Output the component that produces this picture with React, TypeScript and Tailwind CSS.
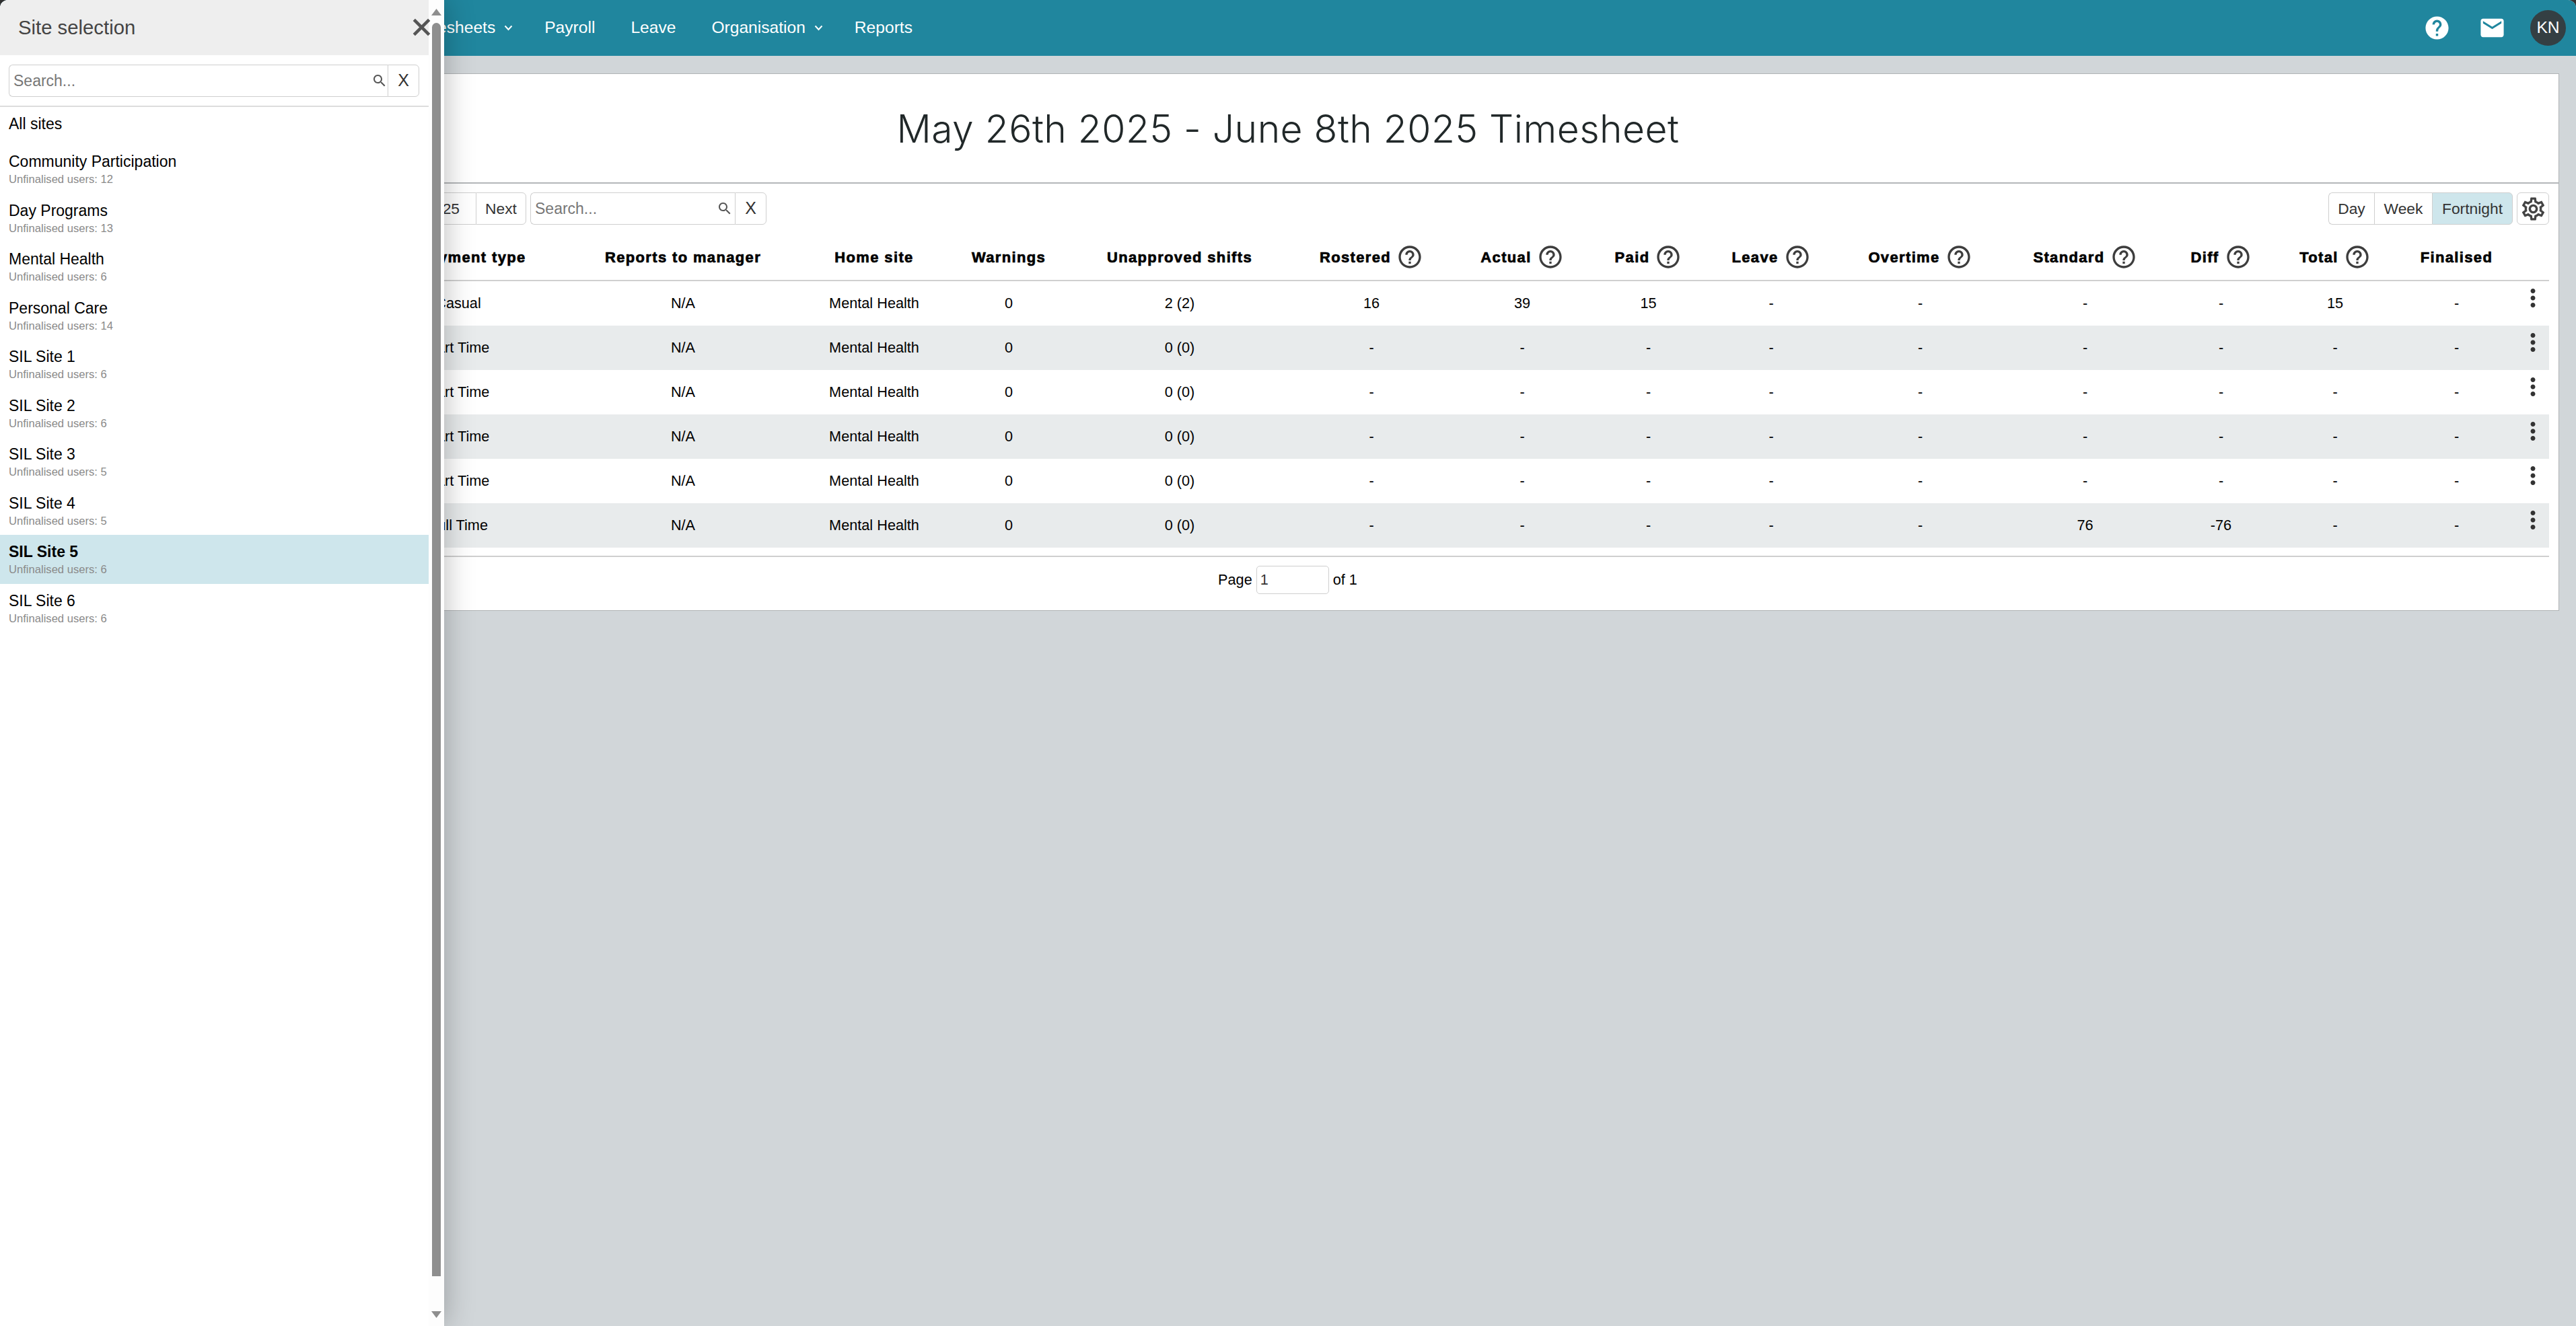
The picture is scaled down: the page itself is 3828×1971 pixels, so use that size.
const ROW = "grid grid-cols-[476px_330px_338px_230px_170px_338px_232px_216px_159px_206px_237px_253px_151px_188px_173px_54px]";

const helpOutline = "M11 18h2v-2h-2v2zm1-16C6.48 2 2 6.48 2 12s4.48 10 10 10 10-4.48 10-10S17.52 2 12 2zm0 18c-4.41 0-8-3.59-8-8s3.59-8 8-8 8 3.59 8 8-3.59 8-8 8zm0-14c-2.21 0-4 1.79-4 4h2c0-1.1.9-2 2-2s2 .9 2 2c0 2-3 1.75-3 5h2c0-2.25 3-2.5 3-5 0-2.21-1.79-4-4-4z";
const searchPath = "M15.5 14h-.79l-.28-.27C15.41 12.59 16 11.11 16 9.5 16 5.91 13.09 3 9.5 3S3 5.91 3 9.5 5.91 16 9.5 16c1.61 0 3.09-.59 4.23-1.57l.27.28v.79l5 4.99L20.49 19l-4.99-5zm-6 0C7.01 14 5 11.99 5 9.5S7.01 5 9.5 5 14 7.01 14 9.5 11.99 14 9.5 14z";

function MI({ d, className }: { d: string; className: string }) {
  return (
    <svg viewBox="0 0 24 24" className={className} fill="currentColor">
      <path d={d} />
    </svg>
  );
}

function Chevron() {
  return (
    <svg viewBox="0 0 13 9" className="ml-[13px] w-[13px] h-[9px]" fill="none" stroke="currentColor" strokeWidth="2">
      <path d="M1.5 1.5 6.5 7l5-5.5" />
    </svg>
  );
}

function SearchBox({ width, iconPad }: { width: string; iconPad: string }) {
  return (
    <div className={`flex items-stretch h-[48px] ${width}`}>
      <div className={`flex-1 flex items-center border border-r-0 border-[#cfcfcf] rounded-l-[6px] pl-[6px] bg-white min-w-0 ${iconPad}`}>
        <span className="flex-1 text-[#777] text-[23px] leading-none">Search...</span>
        <MI d={searchPath} className="w-[24px] h-[24px] text-[#555]" />
      </div>
      <div className="w-[47px] flex items-center justify-center border border-[#cfcfcf] rounded-r-[6px] text-[25px] text-[#333]">X</div>
    </div>
  );
}

const sites: [string, number][] = [
  ["Community Participation", 12],
  ["Day Programs", 13],
  ["Mental Health", 6],
  ["Personal Care", 14],
  ["SIL Site 1", 6],
  ["SIL Site 2", 6],
  ["SIL Site 3", 5],
  ["SIL Site 4", 5],
  ["SIL Site 5", 6],
  ["SIL Site 6", 6],
];

function SitePanel() {
  return (
    <div className="absolute left-0 top-0 h-[1971px] w-[660px] flex bg-white rounded-tl-[12px] overflow-hidden shadow-[0_0_45px_rgba(0,0,0,0.28)] z-10">
      <div className="w-[637px] flex flex-col">
        <div className="h-[82px] bg-[#eeeeee] flex items-center justify-between pl-[27px] relative">
          <span className="text-[29.3px] text-[#444]">Site selection</span>
          <MI
            d="M19 6.41 17.59 5 12 10.59 6.41 5 5 6.41 10.59 12 5 17.59 6.41 19 12 13.41 17.59 19 19 17.59 13.41 12z"
            className="absolute right-[-10px] top-[20px] w-[41px] h-[41px] text-[#555] [stroke:currentColor] [stroke-width:0.7]"
          />
        </div>
        <div className="px-[13px] pt-[14px] pb-[13px] border-b-2 border-[#dcdcdc]">
          <SearchBox width="w-[610px]" iconPad="pr-0" />
        </div>
        <div className="h-[56px] pl-[13px] pt-[11px] text-[23px] leading-[28px] text-black">All sites</div>
        {sites.map(([name, n]) => {
          const active = name === "SIL Site 5";
          return (
            <div key={name} className={`h-[72.5px] pl-[13px] pt-[11px] ${active ? "bg-[#cee6ec]" : ""}`}>
              <div className={`text-[23px] leading-[28px] text-black ${active ? "font-bold" : ""}`}>{name}</div>
              <div className="mt-[3px] text-[16.6px] leading-[20px] text-[#8a8a8a]">Unfinalised users: {n}</div>
            </div>
          );
        })}
      </div>
      <div className="w-[23px] bg-[#fdfdfd] flex flex-col items-center pt-[13px] pb-[12px]">
        <svg viewBox="0 0 15 10" className="w-[15px] h-[10px] text-[#8e8e8e]" fill="currentColor">
          <path d="M7.5 0 15 10H0z" />
        </svg>
        <div className="mt-[11px] w-[13px] h-[1863px] bg-[#8e8e8e] rounded-t-full rounded-b-[3px]" />
        <div className="flex-1" />
        <svg viewBox="0 0 15 10" className="w-[15px] h-[10px] text-[#8e8e8e]" fill="currentColor">
          <path d="M0 0h15L7.5 10z" />
        </svg>
      </div>
    </div>
  );
}

function NavBar() {
  return (
    <div className="h-[83px] bg-[#20869e] flex items-center text-white text-[24.6px] pl-[610px] pr-[15px]">
      <div className="flex items-center gap-[47px]">
        <div className="flex items-center">Timesheets<Chevron /></div>
        <div className="mr-[6px]">Payroll</div>
        <div className="mr-[6px]">Leave</div>
        <div className="flex items-center">Organisation<Chevron /></div>
        <div>Reports</div>
      </div>
      <div className="ml-auto flex items-center">
        <MI
          d="M12 2C6.48 2 2 6.48 2 12s4.48 10 10 10 10-4.48 10-10S17.52 2 12 2zm1 17h-2v-2h2v2zm2.07-7.75l-.9.92C13.45 12.9 13 13.5 13 15h-2v-.5c0-1.1.45-2.1 1.17-2.83l1.24-1.26c.37-.36.59-.86.59-1.41 0-1.1-.9-2-2-2s-2 .9-2 2H8c0-2.21 1.79-4 4-4s4 1.79 4 4c0 .88-.36 1.68-.93 2.25z"
          className="w-[41px] h-[41px] text-white"
        />
        <MI
          d="M20 4H4c-1.1 0-1.99.9-1.99 2L2 18c0 1.1.9 2 2 2h16c1.1 0 2-.9 2-2V6c0-1.1-.9-2-2-2zm0 4l-8 5-8-5V6l8 5 8-5v2z"
          className="ml-[41px] w-[41px] h-[41px] text-white"
        />
        <div className="ml-[36px] w-[53px] h-[53px] rounded-full bg-[#343f43] flex items-center justify-center text-white">KN</div>
      </div>
    </div>
  );
}

function HelpHead({ label }: { label: string }) {
  return (
    <div className="flex items-center justify-center">
      <span>{label}</span>
      <MI d={helpOutline} className="ml-[8px] w-[40px] h-[40px] text-[#3d3d3d] [-webkit-text-stroke:0]" />
    </div>
  );
}

const heads: [string, boolean][] = [
  ["Reports to manager", false],
  ["Home site", false],
  ["Warnings", false],
  ["Unapproved shifts", false],
  ["Rostered", true],
  ["Actual", true],
  ["Paid", true],
  ["Leave", true],
  ["Overtime", true],
  ["Standard", true],
  ["Diff", true],
  ["Total", true],
  ["Finalised", false],
];

const rows: string[][] = [
  ["Casual", "N/A", "Mental Health", "0", "2 (2)", "16", "39", "15", "-", "-", "-", "-", "15", "-"],
  ["Part Time", "N/A", "Mental Health", "0", "0 (0)", "-", "-", "-", "-", "-", "-", "-", "-", "-"],
  ["Part Time", "N/A", "Mental Health", "0", "0 (0)", "-", "-", "-", "-", "-", "-", "-", "-", "-"],
  ["Part Time", "N/A", "Mental Health", "0", "0 (0)", "-", "-", "-", "-", "-", "-", "-", "-", "-"],
  ["Part Time", "N/A", "Mental Health", "0", "0 (0)", "-", "-", "-", "-", "-", "-", "-", "-", "-"],
  ["Full Time", "N/A", "Mental Health", "0", "0 (0)", "-", "-", "-", "-", "-", "76", "-76", "-", "-"],
];

function TimesheetTable() {
  return (
    <div className="mx-[14px]">
      <div className={`${ROW} h-[70px] items-center text-center border-b-2 border-[#cfcfcf] text-[22px] font-bold text-black tracking-[1.35px] [-webkit-text-stroke:0.7px_black] mt-[14px]`}>
        <div />
        <div className="pl-[42px]">Payment type</div>
        {heads.map(([h, help]) =>
          help ? <HelpHead key={h} label={h} /> : <div key={h}>{h}</div>
        )}
        <div />
      </div>
      {rows.map((r, i) => (
        <div key={i} className={`${ROW} h-[66px] items-center text-center text-[21.7px] text-black ${i % 2 === 1 ? "bg-[#e8ebec]" : "bg-white"}`}>
          <div />
          {r.map((c, j) => (
            <div key={j}>{c}</div>
          ))}
          <div className="self-start mt-[4px] flex justify-center text-[#333]">
            <MI d="M12 8c1.1 0 2-.9 2-2s-.9-2-2-2-2 .9-2 2 .9 2 2 2zm0 2c-1.1 0-2 .9-2 2s.9 2 2 2 2-.9 2-2-.9-2-2-2zm0 6c-1.1 0-2 .9-2 2s.9 2 2 2 2-.9 2-2-.9-2-2-2z" className="w-[42px] h-[42px]" />
          </div>
        </div>
      ))}
      <div className="mt-[12px] border-t-2 border-[#cfcfcf] h-[81px] pt-[13px] flex items-start justify-center pr-[1px] text-[21.7px] text-black">
        <span className="leading-[42px]">Page</span>
        <div className="ml-[6px] w-[108px] h-[42px] border border-[#cfcfcf] rounded-[5px] flex items-center pl-[5px] text-[#333]">1</div>
        <span className="ml-[6px] leading-[42px]">of 1</span>
      </div>
    </div>
  );
}

export default function App() {
  return (
    <div className="w-[3828px] h-[1971px] bg-[#333] overflow-hidden relative [font-family:'Liberation_Sans',Arial,sans-serif]">
      <div className="h-full bg-[#d1d6d9] rounded-t-[12px] overflow-hidden">
        <NavBar />
        <div className="mt-[26px] mx-[25px] bg-white border border-[#b0b3b5]">
          <div className="h-[163px] border-b-2 border-[#b4b7b9] flex items-center justify-center pt-[3px]">
            <h1 className="text-[57px] font-light text-[#212829] tracking-[0.45px] [font-family:Inter,sans-serif]">May 26th 2025 - June 8th 2025 Timesheet</h1>
          </div>
          <div className="mt-[13px] mx-[14px] flex h-[48px]">
            <div className="flex pl-[500px]">
              <div className="w-[167px] border border-r-0 border-[#cfcfcf] flex items-center justify-end pr-[24px] text-[22.8px] text-[#333]">25</div>
              <div className="w-[75px] border border-[#cfcfcf] rounded-r-[6px] flex items-center justify-center text-[22.8px] text-[#333]">Next</div>
              <div className="w-[6px]" />
              <SearchBox width="w-[351px]" iconPad="pr-[3px]" />
            </div>
            <div className="ml-auto flex">
              <div className="flex text-[22.8px] text-[#333]">
                <div className="w-[68px] flex items-center justify-center border border-r-0 border-[#cfcfcf] rounded-l-[6px]">Day</div>
                <div className="w-[86px] flex items-center justify-center border border-r-0 border-[#cfcfcf]">Week</div>
                <div className="w-[120px] flex items-center justify-center border border-[#cfcfcf] rounded-r-[6px] bg-[#cee6ec]">Fortnight</div>
              </div>
              <div className="ml-[6px] w-[48px] flex items-center justify-center border border-[#cfcfcf] rounded-[6px] text-[#444]">
                <MI
                  d="M19.43 12.98c.04-.32.07-.64.07-.98 0-.34-.03-.66-.07-.98l2.11-1.65c.19-.15.24-.42.12-.64l-2-3.46c-.09-.16-.26-.25-.44-.25-.06 0-.12.01-.17.03l-2.49 1c-.52-.4-1.08-.73-1.69-.98l-.38-2.65C14.46 2.18 14.25 2 14 2h-4c-.25 0-.46.18-.49.42l-.38 2.65c-.61.25-1.17.59-1.69.98l-2.49-1c-.06-.02-.12-.03-.18-.03-.17 0-.34.09-.43.25l-2 3.46c-.13.22-.07.49.12.64l2.11 1.65c-.04.32-.07.65-.07.98 0 .33.03.66.07.98l-2.11 1.65c-.19.15-.24.42-.12.64l2 3.46c.09.16.26.25.44.25.06 0 .12-.01.17-.03l2.49-1c.52.4 1.08.73 1.69.98l.38 2.65c.03.24.24.42.49.42h4c.25 0 .46-.18.49-.42l.38-2.65c.61-.25 1.17-.59 1.69-.98l2.49 1c.06.02.12.03.18.03.17 0 .34-.09.43-.25l2-3.46c.12-.22.07-.49-.12-.64l-2.11-1.65zm-1.98-1.71c.04.31.05.52.05.73 0 .21-.02.43-.05.73l-.14 1.13.89.7 1.08.84-.7 1.21-1.27-.51-1.04-.42-.9.68c-.43.32-.84.56-1.25.73l-1.06.43-.16 1.13-.2 1.35h-1.4l-.19-1.35-.16-1.13-1.06-.43c-.43-.18-.83-.41-1.23-.71l-.91-.7-1.06.43-1.27.51-.7-1.21 1.08-.84.89-.7-.14-1.13c-.03-.31-.05-.54-.05-.74s.02-.43.05-.73l.14-1.13-.89-.7-1.08-.84.7-1.21 1.27.51 1.04.42.9-.68c.43-.32.84-.56 1.25-.73l1.06-.43.16-1.13.2-1.35h1.39l.19 1.35.16 1.13 1.06.43c.43.18.83.41 1.23.71l.91.7 1.06-.43 1.27-.51.7 1.21-1.07.85-.89.7.14 1.13zM12 8c-2.21 0-4 1.79-4 4s1.79 4 4 4 4-1.79 4-4-1.79-4-4-4zm0 6c-1.1 0-2-.9-2-2s.9-2 2-2 2 .9 2 2-.9 2-2 2z"
                  className="w-[41px] h-[41px]"
                />
              </div>
            </div>
          </div>
          <TimesheetTable />
        </div>
      </div>
      <SitePanel />
    </div>
  );
}
